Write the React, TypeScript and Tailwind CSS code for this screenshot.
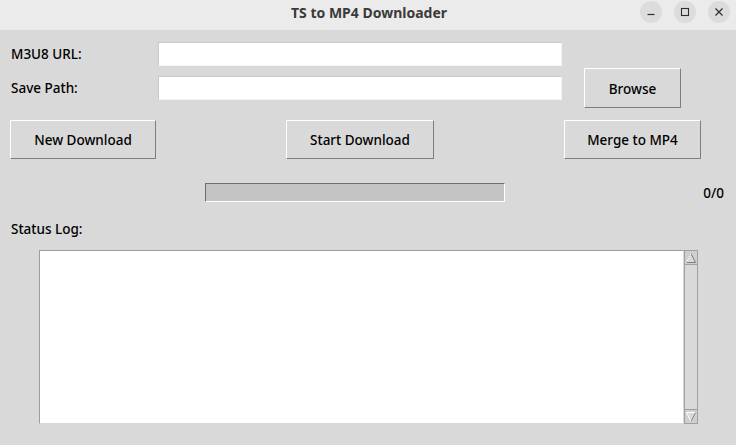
import React from 'react';

const font = { fontFamily: '"Noto Sans", "Open Sans", sans-serif' };

// Tk-style raised button: light top/left, dark bottom/right
const TkButton: React.FC<{ label: string; className?: string }> = ({ label, className = '' }) => (
  <button
    className={`flex items-center justify-center pt-[2px] bg-[#d9d9d9] border border-t-white border-l-white border-b-[#7e7e7e] border-r-[#7e7e7e] text-[13.5px] font-medium text-black ${className}`}
  >
    {label}
  </button>
);

const Entry: React.FC = () => (
  <div className="w-[404px] h-[24px] bg-white border border-[#c8c8c8] border-b-[#f4f4f4] border-r-[#f4f4f4]" />
);

const WinButton: React.FC<{ children: React.ReactNode }> = ({ children }) => (
  <div className="w-[22px] h-[22px] rounded-full bg-[#dcdcdc] flex items-center justify-center">
    {children}
  </div>
);

export default function App() {
  return (
    <div className="w-[736px] h-[445px] bg-[#d9d9d9] flex flex-col overflow-hidden" style={font}>
      {/* Title bar */}
      <div className="h-[30px] bg-[#ebebeb] grid grid-cols-[1fr_auto_1fr] items-center">
        <div />
        <div className="text-[14px] font-bold text-[#3a3a3a] pb-[5px] pl-[2px]">TS to MP4 Downloader</div>
        <div className="flex justify-end gap-[12px] pr-[6px] pb-[6px]">
          <WinButton>
            <svg width="10" height="10" viewBox="0 0 10 10">
              <path d="M1.5 7.5h7" stroke="#2e2e2e" strokeWidth="1.2" />
            </svg>
          </WinButton>
          <WinButton>
            <svg width="10" height="10" viewBox="0 0 10 10">
              <rect x="1.5" y="1.5" width="7" height="7" fill="none" stroke="#2e2e2e" strokeWidth="1.1" />
            </svg>
          </WinButton>
          <WinButton>
            <svg width="10" height="10" viewBox="0 0 10 10">
              <path d="M1.5 1.5l7 7M8.5 1.5l-7 7" stroke="#2e2e2e" strokeWidth="1.2" />
            </svg>
          </WinButton>
        </div>
      </div>

      {/* Body */}
      <div className="flex flex-col text-black">
        <div className="mt-[12px] h-[24px] flex items-center">
          <div className="w-[158px] pl-[11px] text-[13.5px] font-medium">M3U8 URL:</div>
          <Entry />
        </div>
        <div className="mt-[10px] h-[24px] flex items-center">
          <div className="w-[158px] pl-[11px] text-[13.5px] font-medium">Save Path:</div>
          <Entry />
          <TkButton label="Browse" className="ml-[22px] w-[97px] h-[40px] shrink-0" />
        </div>

        <div className="mt-[20px] h-[39px] flex">
          <TkButton label="New Download" className="ml-[10px] w-[146px] h-[39px]" />
          <TkButton label="Start Download" className="ml-[130px] w-[148px] h-[39px]" />
          <TkButton label="Merge to MP4" className="ml-[130px] w-[137px] h-[39px]" />
        </div>

        <div className="mt-[24px] h-[19px] flex items-center">
          <div className="ml-[205px] w-[300px] h-[19px] bg-[#c4c4c4] border border-t-[#6f6f6f] border-l-[#6f6f6f] border-b-white border-r-white" />
          <div className="ml-auto mr-[12px] pt-[1px] text-[13.5px] font-medium">0/0</div>
        </div>

        <div className="mt-[17px] pl-[11px] text-[13.5px] font-medium h-[20px] leading-[20px]">Status Log:</div>

        <div className="mt-[11px] ml-[39px] flex h-[174px]">
          <div className="w-[645px] bg-white border border-[#9c9c9c] border-r-[#d9d9d9] border-b-[#d9d9d9]" />
          <div className="w-[14px] flex flex-col border border-[#a0a0a0] bg-[#d9d9d9]">
            <div className="h-[14px] border-b border-[#a0a0a0] flex items-center justify-center bg-[#cfcfcf]">
              <svg width="12" height="12" viewBox="0 0 12 12">
                <path d="M6 1.5L10.5 10.5H1.5Z" fill="#d9d9d9" stroke="#808080" strokeWidth="1" />
                <path d="M6 1.5L1.5 10.5" stroke="#ffffff" strokeWidth="1" />
              </svg>
            </div>
            <div className="flex-1" />
            <div className="h-[14px] border-t border-[#a0a0a0] flex items-center justify-center bg-[#cfcfcf]">
              <svg width="12" height="12" viewBox="0 0 12 12">
                <path d="M6 10.5L10.5 1.5H1.5Z" fill="#d9d9d9" stroke="#ffffff" strokeWidth="1" />
                <path d="M6 10.5L10.5 1.5" stroke="#808080" strokeWidth="1" />
              </svg>
            </div>
          </div>
        </div>
      </div>
    </div>
  );
}
